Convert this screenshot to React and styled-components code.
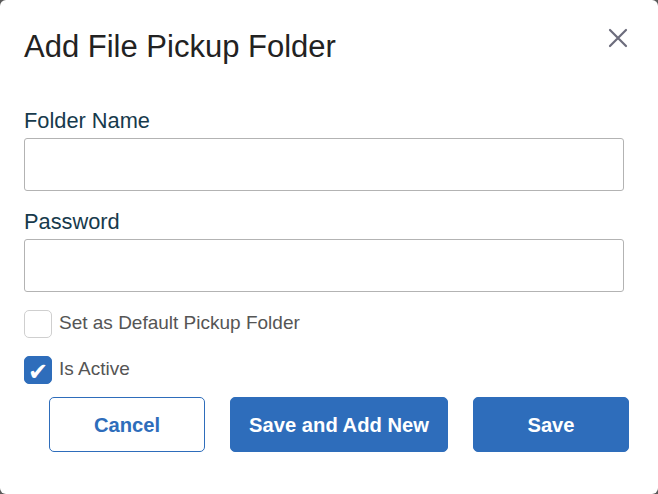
import React, { useState } from 'react'
import styled, { createGlobalStyle } from 'styled-components'

const GlobalStyle = createGlobalStyle`
  html, body {
    margin: 0;
    padding: 0;
    background: #5a5a5a;
  }
  * {
    box-sizing: border-box;
  }
`

const Dialog = styled.div`
  width: 658px;
  height: 494px;
  background: #fff;
  border-radius: 6px;
  padding: 29px 34px 0 24px;
  font-family: 'Liberation Sans', Arial, sans-serif;
  display: flex;
  flex-direction: column;
`

const Header = styled.div`
  display: flex;
  justify-content: space-between;
  align-items: flex-start;
  margin-right: -4px;
  margin-bottom: 43px;
`

const Title = styled.h2`
  margin: 0;
  font-size: 31px;
  font-weight: 400;
  line-height: 36px;
  color: #222;
`

const CloseButton = styled.button`
  border: 0;
  background: none;
  padding: 0;
  margin-top: -1px;
  width: 20px;
  height: 20px;
  cursor: pointer;
  display: flex;
`

const Field = styled.div`
  display: flex;
  flex-direction: column;
  margin-bottom: 18px;
`

const Label = styled.label`
  font-size: 21.8px;
  line-height: 25px;
  color: #173a4c;
  margin-bottom: 5px;
`

const Input = styled.input`
  height: 53px;
  width: 600px;
  border: 1px solid #b3b3b3;
  border-radius: 3px;
  font-size: 18px;
  padding: 0 12px;
  font-family: inherit;
  outline: none;
`

const CheckRow = styled.label`
  display: flex;
  align-items: center;
  gap: 7px;
  margin-bottom: ${p => p.$last ? '13px' : '18px'};
  cursor: pointer;
`

const Box = styled.span`
  flex-shrink: 0;
  width: 28px;
  height: 28px;
  border-radius: 5px;
  border: 1px solid ${p => p.$checked ? '#2e6dbb' : '#cfcfcf'};
  background: ${p => p.$checked ? '#2e6dbb' : '#fff'};
  display: flex;
  align-items: center;
  justify-content: center;
  color: #fff;
  font-family: 'DejaVu Sans', sans-serif;
  font-size: 24px;
  font-weight: 700;
  line-height: 1;
  padding-top: 3px;
`

const CheckText = styled.span`
  font-size: 19px;
  color: #555;
  margin-top: -2px;
`

const ButtonRow = styled.div`
  display: flex;
  gap: 25px;
  margin: 0 -5px 0 25px;
`

const Button = styled.button`
  flex-shrink: 0;
  width: ${p => p.$wide ? '218px' : '156px'};
  height: 55px;
  border-radius: 5px;
  border: 1px solid #2e6dbb;
  background: ${p => p.$primary ? '#2e6dbb' : '#fff'};
  color: ${p => p.$primary ? '#fff' : '#2e6dbb'};
  font-family: 'Liberation Sans', Arial, sans-serif;
  font-weight: 700;
  font-size: 20.2px;
  padding-top: 2px;
  cursor: pointer;
`

function CheckBox({ checked, onChange, children, last }) {
  return (
    <CheckRow $last={last} onClick={onChange}>
      <Box $checked={checked}>{checked ? '✔' : ''}</Box>
      <CheckText>{children}</CheckText>
    </CheckRow>
  )
}

export default function App() {
  const [isDefault, setIsDefault] = useState(false)
  const [isActive, setIsActive] = useState(true)

  return (
    <>
      <GlobalStyle />
      <Dialog>
        <Header>
          <Title>Add File Pickup Folder</Title>
          <CloseButton aria-label="Close">
            <svg width="20" height="20" viewBox="0 0 20 20">
              <path d="M2 2 L18 18 M18 2 L2 18" stroke="#6c6c7c" strokeWidth="2.2" strokeLinecap="round" />
            </svg>
          </CloseButton>
        </Header>
        <Field>
          <Label>Folder Name</Label>
          <Input type="text" />
        </Field>
        <Field>
          <Label>Password</Label>
          <Input type="password" />
        </Field>
        <CheckBox checked={isDefault} onChange={() => setIsDefault(!isDefault)}>
          Set as Default Pickup Folder
        </CheckBox>
        <CheckBox checked={isActive} onChange={() => setIsActive(!isActive)} last>
          Is Active
        </CheckBox>
        <ButtonRow>
          <Button>Cancel</Button>
          <Button $primary $wide>Save and Add New</Button>
          <Button $primary>Save</Button>
        </ButtonRow>
      </Dialog>
    </>
  )
}
